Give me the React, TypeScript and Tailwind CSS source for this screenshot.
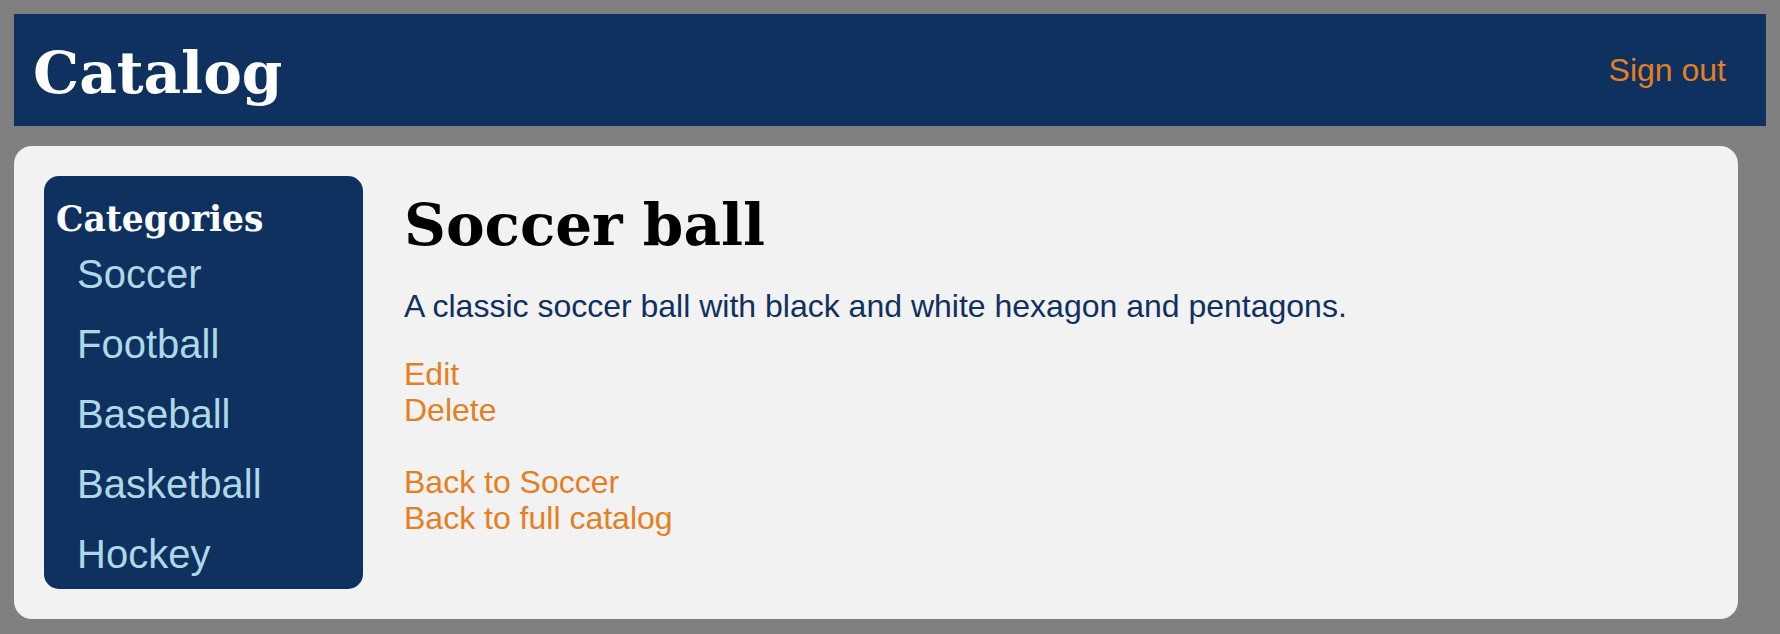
import React from 'react'

const categories = ['Soccer', 'Football', 'Baseball', 'Basketball', 'Hockey']

const serif = { fontFamily: '"DejaVu Serif", Georgia, serif' }

const App = () => {
  return (
    <div className="min-h-[634px] bg-[#808080] px-[14px] py-[14px] font-['Liberation_Sans',Arial,sans-serif]">
      <header className="flex h-[112px] items-center justify-between bg-[#0e3160] pl-[19px] pr-[40px] pt-[5px]">
        <h1 className="text-[58px] font-bold leading-[70px] text-white" style={serif}>
          Catalog
        </h1>
        <a href="#" className="mb-[5px] text-[32px] leading-[36px] text-[#e67e22]">
          Sign out
        </a>
      </header>

      <main className="mr-[28px] mt-[20px] flex gap-[41px] rounded-[18px] bg-[#f2f2f2] p-[30px]">
        <nav className="w-[319px] shrink-0 rounded-[15px] bg-[#0e3160]">
          <h2 className="pl-[12px] pt-[24px] text-[34.5px] font-bold leading-[39px] text-white" style={serif}>
            Categories
          </h2>
          <ul className="pl-[33px]">
            {categories.map((c) => (
              <li key={c} className="text-[40px] leading-[70px] text-[#add8e6]">
                <a href="#">{c}</a>
              </li>
            ))}
          </ul>
        </nav>

        <section className="pt-[14px]">
          <h1 className="text-[58px] font-bold leading-[70px] text-black" style={serif}>
            Soccer ball
          </h1>
          <p className="mt-[28px] text-[32px] leading-[36px] text-[#0e3160]">
            A classic soccer ball with black and white hexagon and pentagons.
          </p>
          <div className="mt-[32px] flex flex-col text-[32px] leading-[36px] text-[#e67e22]">
            <a href="#">Edit</a>
            <a href="#">Delete</a>
          </div>
          <div className="mt-[36px] flex flex-col text-[32px] leading-[36px] text-[#e67e22]">
            <a href="#">Back to Soccer</a>
            <a href="#">Back to full catalog</a>
          </div>
        </section>
      </main>
    </div>
  )
}

export default App
